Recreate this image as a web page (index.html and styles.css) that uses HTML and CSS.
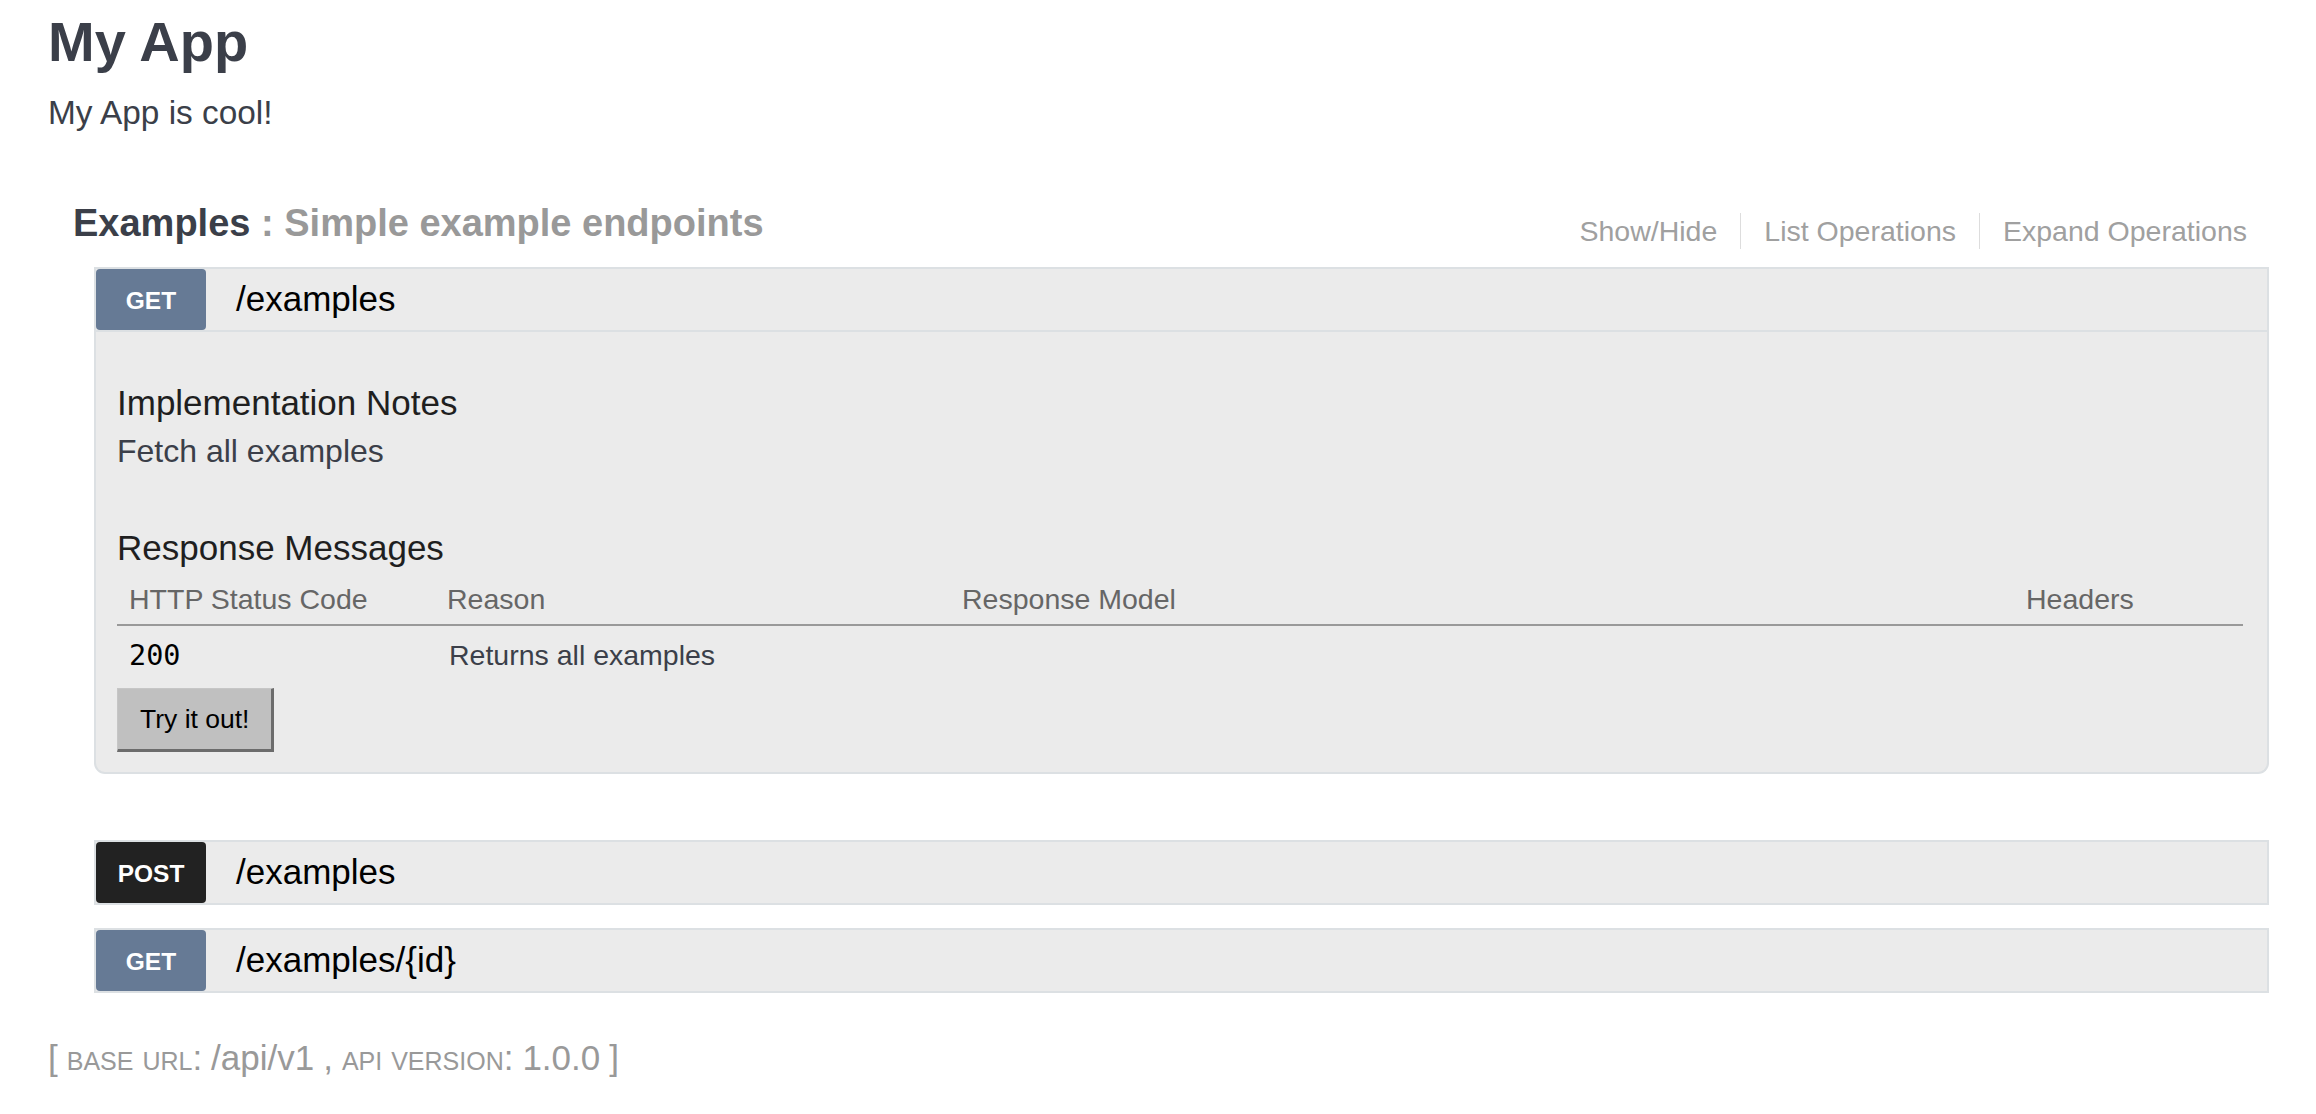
FILE: index.html
```html
<!DOCTYPE html>
<html lang="en">
<head>
<meta charset="utf-8">
<title>My App</title>
<link rel="stylesheet" href="styles.css">
</head>
<body>
<div class="page">
  <header class="info">
    <h1 class="info-title">My App</h1>
    <p class="info-desc">My App is cool!</p>
  </header>

  <section class="resource">
    <div class="resource-heading">
      <h2 class="resource-title"><span class="res-name">Examples</span><span class="res-desc"> : Simple example endpoints</span></h2>
      <ul class="options">
        <li class="option">Show/Hide</li>
        <li class="option">List Operations</li>
        <li class="option">Expand Operations</li>
      </ul>
    </div>

    <ul class="operations">
      <li class="operation">
        <div class="op-heading">
          <span class="method method-get">GET</span>
          <span class="path">/examples</span>
        </div>
        <div class="op-content">
          <h4 class="section-title notes-title">Implementation Notes</h4>
          <p class="notes">Fetch all examples</p>
          <h4 class="section-title responses-title">Response Messages</h4>
          <table class="responses">
            <colgroup>
              <col class="col-code">
              <col class="col-reason">
              <col class="col-model">
              <col class="col-headers">
            </colgroup>
            <thead>
              <tr>
                <th>HTTP Status Code</th>
                <th>Reason</th>
                <th>Response Model</th>
                <th>Headers</th>
              </tr>
            </thead>
            <tbody>
              <tr>
                <td class="code">200</td>
                <td class="reason">Returns all examples</td>
                <td></td>
                <td></td>
              </tr>
            </tbody>
          </table>
          <button class="try" type="button">Try it out!</button>
        </div>
      </li>

      <li class="operation operation-collapsed operation-first-collapsed">
        <div class="op-heading">
          <span class="method method-post">POST</span>
          <span class="path">/examples</span>
        </div>
      </li>

      <li class="operation operation-collapsed">
        <div class="op-heading">
          <span class="method method-get">GET</span>
          <span class="path">/examples/{id}</span>
        </div>
      </li>
    </ul>
  </section>

  <footer class="footer">[ <span class="sc">base url</span>: /api/v1 , <span class="sc">api version</span>: 1.0.0 ]</footer>
</div>
</body>
</html>
```

FILE: styles.css
```css
* {
  box-sizing: border-box;
}

html, body {
  margin: 0;
  padding: 0;
  background: #ffffff;
}

body {
  font-family: "Liberation Sans", Arial, Helvetica, sans-serif;
  color: #3b4151;
}

.page {
  padding: 10px 47px 0 48px;
}

/* ---------- info ---------- */
.info-title {
  margin: 0;
  font-size: 56px;
  line-height: 64px;
  font-weight: bold;
  color: #3b3f49;
}

.info-desc {
  margin: 19px 0 0;
  font-size: 33.4px;
  line-height: 40px;
  color: #3b3f49;
}

/* ---------- resource ---------- */
.resource {
  margin-top: 68px;
}

.resource-heading {
  display: flex;
  justify-content: space-between;
  align-items: flex-start;
  padding: 0 22px 0 25px;
}

.resource-title {
  margin: 0;
  font-size: 38px;
  line-height: 44px;
  font-weight: bold;
}

.res-name {
  color: #3b3f49;
}

.res-desc {
  color: #999999;
}

.options {
  display: flex;
  list-style: none;
  margin: 12px 0 0;
  padding: 0;
}

.option {
  font-size: 28.5px;
  line-height: 36px;
  color: #a0a0a0;
  padding: 0 23px;
  border-left: 1px solid #dddddd;
}

.option:first-child {
  border-left: none;
}

.option:last-child {
  padding-right: 0;
}

/* ---------- operations ---------- */
.operations {
  list-style: none;
  margin: 18px 0 0 46px;
  padding: 0;
}

.operation-collapsed {
  margin-top: 23px;
}

.operation-first-collapsed {
  margin-top: 66px;
}

.op-heading {
  display: flex;
  align-items: center;
  height: 65px;
  background: #ebebeb;
  border: 2px solid #dce0e3;
}

.method {
  width: 110px;
  height: 61px;
  border-radius: 4px;
  padding-top: 3px;
  line-height: 58px;
  text-align: center;
  font-size: 24.5px;
  font-weight: bold;
  color: #ffffff;
}

.method-get {
  background: #667a95;
}

.method-post {
  background: #222222;
}

.path {
  margin-left: 30px;
  font-size: 35px;
  line-height: 40px;
  margin-top: -2px;
  color: #000000;
}

.op-content {
  background: #ebebeb;
  border: 2px solid #dce0e3;
  border-top: none;
  border-radius: 0 0 11px 11px;
  padding: 20px 24px 20px 21px;
}

.section-title {
  margin: 0;
  font-size: 35px;
  line-height: 40px;
  font-weight: normal;
  color: #1f1f1f;
}

.notes-title {
  margin-top: 31px;
}

.notes {
  margin: 8px 0 0;
  font-size: 32px;
  line-height: 40px;
  color: #3b3f49;
}

.responses-title {
  margin-top: 57px;
}

/* ---------- table ---------- */
.responses {
  width: 100%;
  margin-top: 13px;
  border-collapse: collapse;
  table-layout: fixed;
}

.col-code {
  width: 318px;
}

.col-reason {
  width: 515px;
}

.col-headers {
  width: 229px;
}

.responses th {
  text-align: left;
  font-weight: normal;
  font-size: 28.5px;
  line-height: 36px;
  color: #666666;
  padding: 0 10px 7px 12px;
  border-bottom: 2px solid #999999;
  vertical-align: baseline;
}

.responses td {
  font-size: 28.5px;
  line-height: 36px;
  padding: 11px 10px 7px 14px;
  vertical-align: baseline;
}

.responses td.code {
  font-family: "DejaVu Sans Mono", "Liberation Mono", monospace;
  color: #000000;
  padding-left: 12px;
}

.responses td.reason {
  color: #3b3f49;
}

/* ---------- button ---------- */
.try {
  display: block;
  margin-top: 7px;
  height: 64px;
  padding: 0 22px;
  font-family: "Liberation Sans", Arial, Helvetica, sans-serif;
  font-size: 26.5px;
  line-height: 60px;
  color: #000000;
  background: #c0c0c0;
  border-style: solid;
  border-width: 1px 3px 3px 1px;
  border-color: #c6c6c6 #6c6c6c #6c6c6c #c6c6c6;
  border-radius: 0;
}

/* ---------- footer ---------- */
.footer {
  margin-top: 45px;
  font-size: 35px;
  line-height: 40px;
  word-spacing: -0.75px;
  color: #999999;
}

.sc {
  font-variant: small-caps;
}
```
